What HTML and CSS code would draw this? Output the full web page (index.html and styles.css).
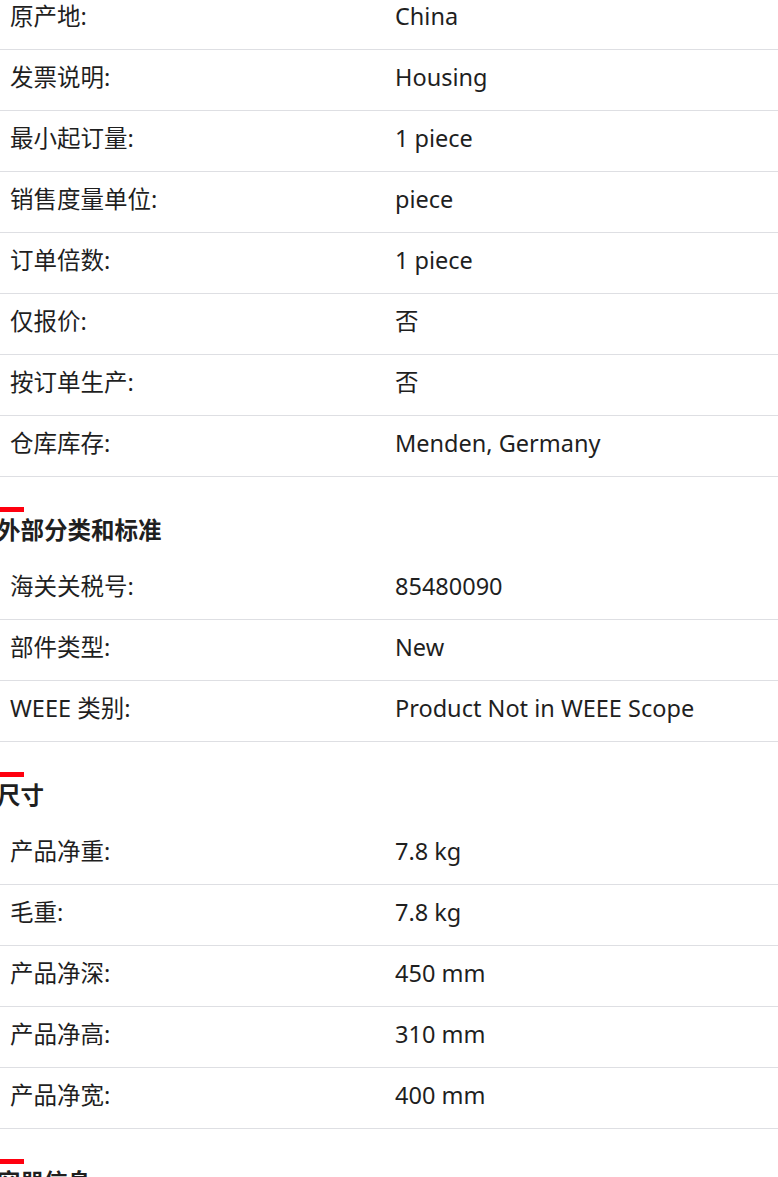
FILE: index.html
```html
<!DOCTYPE html>
<html lang="zh">
<head>
<meta charset="utf-8">
<link rel="stylesheet" href="styles.css">
</head>
<body>
<div class="page">
  <section class="group first">
    <div class="rows">
      <div class="row"><div class="label">原产地:</div><div class="value">China</div></div>
      <div class="row"><div class="label">发票说明:</div><div class="value">Housing</div></div>
      <div class="row"><div class="label">最小起订量:</div><div class="value">1 piece</div></div>
      <div class="row"><div class="label">销售度量单位:</div><div class="value">piece</div></div>
      <div class="row"><div class="label">订单倍数:</div><div class="value">1 piece</div></div>
      <div class="row"><div class="label">仅报价:</div><div class="value">否</div></div>
      <div class="row"><div class="label">按订单生产:</div><div class="value">否</div></div>
      <div class="row"><div class="label">仓库库存:</div><div class="value">Menden, Germany</div></div>
    </div>
  </section>
  <section class="group">
    <div class="heading"><span class="bar"></span><h2 class="title">外部分类和标准</h2></div>
    <div class="rows">
      <div class="row"><div class="label">海关关税号:</div><div class="value">85480090</div></div>
      <div class="row"><div class="label">部件类型:</div><div class="value">New</div></div>
      <div class="row"><div class="label">WEEE 类别:</div><div class="value">Product Not in WEEE Scope</div></div>
    </div>
  </section>
  <section class="group">
    <div class="heading"><span class="bar"></span><h2 class="title">尺寸</h2></div>
    <div class="rows">
      <div class="row"><div class="label">产品净重:</div><div class="value">7.8 kg</div></div>
      <div class="row"><div class="label">毛重:</div><div class="value">7.8 kg</div></div>
      <div class="row"><div class="label">产品净深:</div><div class="value">450 mm</div></div>
      <div class="row"><div class="label">产品净高:</div><div class="value">310 mm</div></div>
      <div class="row"><div class="label">产品净宽:</div><div class="value">400 mm</div></div>
    </div>
  </section>
  <section class="group">
    <div class="heading"><span class="bar"></span><h2 class="title">容器信息</h2></div>
  </section>
</div>
</body>
</html>
```

FILE: styles.css
```css
html, body {
  margin: 0;
  padding: 0;
  background: #ffffff;
}
body {
  font-family: "Noto Sans", "Noto Sans CJK SC", sans-serif;
  color: #1f1f1f;
  overflow: hidden;
}
.page {
  margin-top: -11px;
  width: 778px;
}
.rows {
  display: flex;
  flex-direction: column;
}
.row {
  display: grid;
  grid-template-columns: 385px 1fr;
  align-items: center;
  border-bottom: 1px solid #dedfe3;
  font-size: 23.5px;
  line-height: 32px;
  height: 54px;
  padding-bottom: 6px;
}
.label {
  padding-left: 10px;
}
.value {
  padding-left: 10px;
}
.heading {
  padding-top: 30px;
  display: flex;
  flex-direction: column;
  align-items: flex-start;
  margin-bottom: 11px;
}
.bar {
  display: block;
  width: 24px;
  height: 5px;
  background: #ff000f;
}
.title {
  margin: 0 0 0 -3px;
  font-size: 23.5px;
  line-height: 36px;
  font-weight: 700;
  color: #1f1f1f;
}
```
